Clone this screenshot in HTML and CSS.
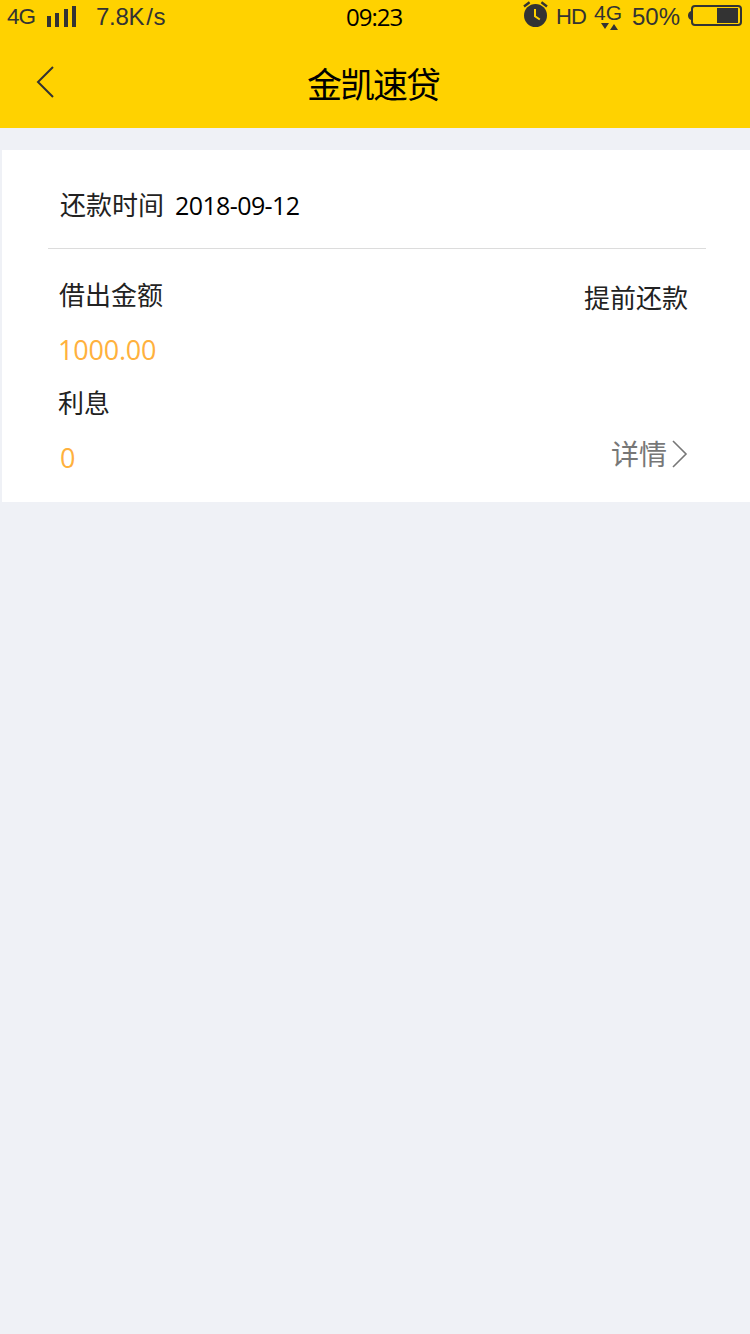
FILE: index.html
```html
<!DOCTYPE html>
<html lang="zh-CN">
<head>
<meta charset="utf-8">
<title>金凯速贷</title>
<link rel="stylesheet" href="styles.css">
</head>
<body>
<header class="header">
  <div class="status">
    <div class="status-left">
      <span class="net">4G</span>
      <svg class="signal" width="30" height="22" viewBox="0 0 30 22"><path d="M0 10h4v11H0zM8 7h4v14H8zM17 3h4v18h-4zM25 0h4v21h-4z" fill="#333"/></svg>
      <span class="speed">7.8K<span class="slash">/</span>s</span>
    </div>
    <time class="clock">09:23</time>
    <div class="status-right">
      <svg class="alarm" width="26" height="28" viewBox="0 0 26 28"><circle cx="12.500" cy="15.500" r="11.500" fill="#333"/><path d="M1 6.500 6.600 2.300M24 6.500 18.400 2.300" stroke="#333" stroke-width="2.400" fill="none"/><path d="M12 9v7.200l4.800 3.300" stroke="#ffd200" stroke-width="2" fill="none"/></svg>
      <span class="hd">HD</span>
      <span class="data"><span class="data-label">4G</span><svg class="arrows" width="18" height="7" viewBox="0 0 18 7"><path d="M0 0h8L4 6zM9 7h8l-4-6z" fill="#333"/></svg></span>
      <span class="percent">50%</span>
      <svg class="battery" width="54" height="22" viewBox="0 0 54 22"><rect x="4" y="1" width="49" height="19" rx="3" fill="none" stroke="#333" stroke-width="2"/><path d="M3 6v9C1 14 0 13 0 10.500S1 7 3 6zM29 3h21v15H29z" fill="#333"/></svg>
    </div>
  </div>
  <div class="nav">
    <svg class="back" width="20" height="32" viewBox="0 0 20 32"><path d="M17 1 2 16l15 15" fill="none" stroke="#333" stroke-width="2"/></svg>
    <h1 class="title">金凯速贷</h1>
  </div>
</header>
<main class="card">
  <div class="due">
    <span class="due-label">还款时间</span>
    <time class="date">2018-09-12</time>
  </div>
  <div class="loan">
    <div class="amounts">
      <div class="label">借出金额</div>
      <div class="value">1000.00</div>
      <div class="label interest">利息</div>
      <div class="value zero">0</div>
    </div>
    <div class="actions">
      <span class="prepay">提前还款</span>
      <span class="detail">详情<svg class="chevron" width="16" height="28" viewBox="0 0 16 28"><path d="m1 1 13 13L1 27" fill="none" stroke="#777" stroke-width="1.600"/></svg></span>
    </div>
  </div>
</main>
</body>
</html>
```
FILE: styles.css
```css
* { box-sizing: border-box; }
body {
  margin: 0;
  min-height: 1334px;
  background: #eff1f6;
  color: #222;
  font-family: "Noto Sans CJK SC", sans-serif;
}
svg { display: block; flex: none; }
.header { height: 128px; background: #ffd200; }
.status {
  display: grid;
  grid-template-columns: 346px 1fr 227px;
  height: 34px;
  color: #333;
  font: 24px/34px "Liberation Sans", sans-serif;
  white-space: nowrap;
}
.status-left, .status-right { display: flex; align-items: flex-start; }
.net { width: 39px; padding-left: 7px; font-size: 22.5px; letter-spacing: -1px; }
.signal { margin: 6px 19px 0 8px; }
.speed { letter-spacing: -0.3px; }
.slash { margin: 0 1px 0 2px; }
.clock {
  color: #000;
  font-family: "Open Sans", sans-serif;
  letter-spacing: -1px;
}
.alarm { margin: 0 7px 0 0; }
.hd { width: 38px; font-size: 22px; letter-spacing: -1px; line-height: 33px; }
.data { width: 38px; display: flex; flex-direction: column; }
.data-label { height: 23px; font-size: 21px; line-height: 25px; }
.arrows { margin-left: 7px; }
.percent { width: 56px; }
.battery { margin-top: 5px; }
.nav { display: grid; grid-template-columns: 36px 271px 1fr; height: 94px; }
.back { grid-column: 2; margin-top: 32px; }
.title {
  margin: 0;
  padding-top: 23px;
  color: #000;
  font-size: 35px;
  font-weight: 400;
  line-height: 52px;
  letter-spacing: -2px;
}
.card { height: 352px; margin: 22px 0 0 2px; padding: 0 44px 0 46px; background: #fff; }
.due {
  display: flex;
  gap: 12px;
  height: 99px;
  padding-left: 12px;
  border-bottom: 1px solid #dcdcdc;
  font-size: 26px;
  line-height: 108px;
}
.due-label { width: 103px; white-space: nowrap; }
.date {
  color: #000;
  font-family: "Open Sans", sans-serif;
  font-size: 25px;
  letter-spacing: -0.6px;
  line-height: 110px;
}
.loan { display: flex; justify-content: space-between; padding: 26px 18px 0 10px; }
.label { height: 54px; padding-left: 1px; font-size: 26px; line-height: 38px; }
.value { height: 54px; color: #ffb13d; font: 27px/41px "Open Sans", sans-serif; letter-spacing: -0.2px; }
.interest { padding-left: 0; }
.zero { padding-left: 2px; }
.actions { display: flex; flex-direction: column; align-items: flex-end; }
.prepay { height: 156px; font-size: 26px; line-height: 44px; }
.detail { display: flex; align-items: center; height: 44px; color: #777; font-size: 28px; }
.chevron { margin: 2px 0 0 5px; }
```
